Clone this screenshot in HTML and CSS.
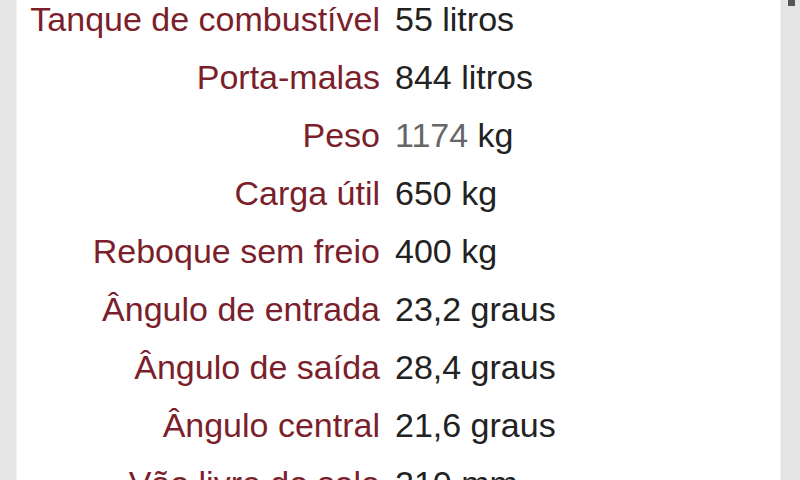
FILE: index.html
```html
<!DOCTYPE html>
<html lang="pt">
<head>
    <meta charset="UTF-8">
    <meta name="viewport" content="width=device-width, initial-scale=1.0">
    <link rel="stylesheet" href="styles.css">
    <title>Especificações</title>
</head>
<body>
    <div class="page">
        <dl class="specs">
            <dt>Tanque de combustível</dt>
            <dd>55 litros</dd>

            <dt>Porta-malas</dt>
            <dd>844 litros</dd>

            <dt>Peso</dt>
            <dd><span class="muted">1174</span> kg</dd>

            <dt>Carga útil</dt>
            <dd>650 kg</dd>

            <dt>Reboque sem freio</dt>
            <dd>400 kg</dd>

            <dt>Ângulo de entrada</dt>
            <dd>23,2 graus</dd>

            <dt>Ângulo de saída</dt>
            <dd>28,4 graus</dd>

            <dt>Ângulo central</dt>
            <dd>21,6 graus</dd>

            <dt>Vão livre do solo</dt>
            <dd>210 mm</dd>
        </dl>
    </div>
    <div class="scroll">
        <div class="scroll-thumb"></div>
    </div>
</body>
</html>
```

FILE: styles.css
```css
html, body {
    height: 100%;
}

body {
    font-family: "Liberation Sans", Arial, sans-serif;
    margin: 0;
    padding: 0;
    background-color: #e6e6e6;
    display: flex;
    overflow: hidden;
}

.page {
    flex: 1;
    margin-left: 16px;
    background-color: #fff;
    border-left: 1px solid #f0f0f0;
    overflow: hidden;
}

.scroll {
    width: 19px;
    border-left: 1px solid #eeeeee;
    background-color: #e4e4e4;
}

.scroll-thumb {
    width: 7px;
    height: 6px;
    margin-left: 7px;
    background-color: #555;
}

.specs {
    display: grid;
    grid-template-columns: 363px auto;
    column-gap: 15px;
    margin: -10px 0 0 0;
    font-size: 34px;
    line-height: 58px;
}

.specs dt {
    text-align: right;
    color: #7a1f2b;
    white-space: nowrap;
}

.specs dd {
    margin: 0;
    color: #222;
    white-space: nowrap;
}

.muted {
    color: #666;
}
```
